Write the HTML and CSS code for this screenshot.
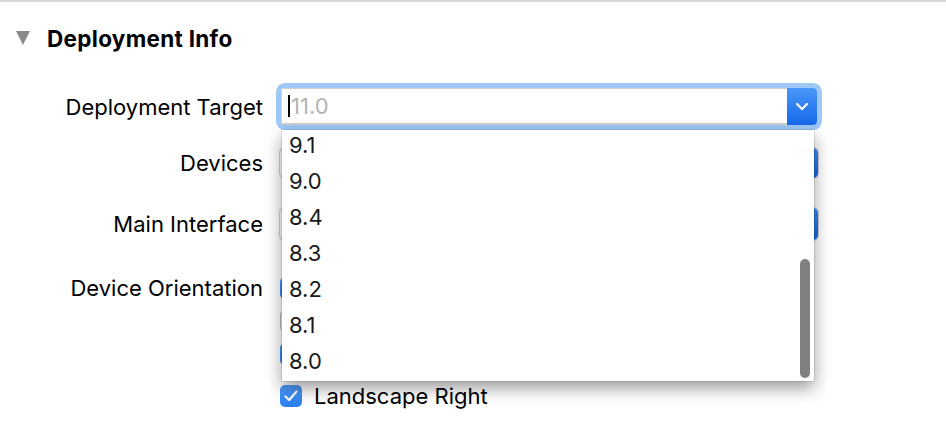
FILE: index.html
```html
<!DOCTYPE html>
<html>
<head>
<meta charset="utf-8">
<link rel="stylesheet" href="styles.css">
</head>
<body>
<div class="rule"></div>
<div class="section">
  <div class="heading">
    <span class="disclosure"></span>
    <span class="title">Deployment Info</span>
  </div>
  <div class="form">
    <div class="row row-target">
      <div class="label">Deployment Target</div>
      <div class="control">
        <div class="combo">
          <div class="combo-field"><span class="caret"></span><span class="placeholder">11.0</span></div>
          <div class="combo-btn">
            <svg width="14" height="9" viewBox="0 0 14 9"><path d="M2 2 L7 7 L12 2" fill="none" stroke="#fff" stroke-width="2.2" stroke-linecap="round" stroke-linejoin="round"/></svg>
          </div>
        </div>
      </div>
    </div>
    <div class="row row-devices">
      <div class="label">Devices</div>
      <div class="control"><div class="popup popup-a"><div class="popup-btn"></div></div></div>
    </div>
    <div class="row row-main">
      <div class="label">Main Interface</div>
      <div class="control"><div class="popup popup-b"><div class="popup-btn"></div></div></div>
    </div>
    <div class="row row-orient">
      <div class="label label-top">Device Orientation</div>
      <div class="control checks">
        <div class="check-row"><span class="box on"></span></div>
        <div class="check-row"><span class="box"></span></div>
        <div class="check-row"><span class="box on"></span></div>
        <div class="check-row last"><span class="box on"><svg width="16" height="14" viewBox="0 0 16 14"><path d="M2.5 7.5 L6.2 11 L13.5 2.5" fill="none" stroke="#fff" stroke-width="2.2" stroke-linecap="round" stroke-linejoin="round"/></svg></span><span class="check-text">Landscape Right</span></div>
      </div>
    </div>
  </div>
  <div class="menu">
    <div class="menu-list">
      <div class="item">9.1</div>
      <div class="item">9.0</div>
      <div class="item">8.4</div>
      <div class="item">8.3</div>
      <div class="item">8.2</div>
      <div class="item">8.1</div>
      <div class="item">8.0</div>
    </div>
    <div class="scroll-thumb"></div>
  </div>
</div>
</body>
</html>
```
FILE: styles.css
```css
html, body {
  margin: 0;
  padding: 0;
  background: #ffffff;
}
body {
  width: 946px;
  height: 428px;
  overflow: hidden;
  font-family: Inter, "Liberation Sans", sans-serif;
  color: #1a1a1a;
}
.rule {
  height: 2px;
  background: #d9d9d9;
}
.section {
  position: relative;
  padding-top: 24px;
}
.heading {
  display: flex;
  align-items: center;
  height: 24px;
  padding-left: 16px;
}
.disclosure {
  width: 0;
  height: 0;
  border-left: 7.5px solid transparent;
  border-right: 7.5px solid transparent;
  border-top: 14px solid #8a8a8a;
  margin-right: 17px;
}
.title {
  font-weight: 700;
  font-size: 22.5px;
  color: #000;
  letter-spacing: 0.3px;
}
.form {
  display: flex;
  flex-direction: column;
  width: 822px;
}
.row {
  display: grid;
  grid-template-columns: 263px 1fr;
  column-gap: 17px;
  align-items: center;
}
.label {
  text-align: right;
  font-size: 22px;
  color: #000;
  white-space: nowrap;
}
.row-target { margin-top: 33px; height: 47px; }
.row-devices { margin-top: 18px; height: 30px; }
.row-main { margin-top: 30px; height: 32px; }
.row-orient { margin-top: 37px; align-items: start; }
.label-top { line-height: 22px; }

.combo {
  display: flex;
  height: 37px;
  margin-left: 1px;
  width: 536px;
  border-radius: 4px;
  box-shadow: 0 0 0 5px #9ec8f6;
  background: #fff;
}
.combo-field {
  flex: 1;
  display: flex;
  align-items: center;
  padding-left: 6px;
  border-bottom: 2px solid #cfcfcf;
  border-top: 1px solid #d0d0d0;
  border-left: 1px solid #d0d0d0;
  box-sizing: border-box;
}
.caret {
  width: 2px;
  height: 22px;
  background: #000;
  margin-right: 1px;
}
.placeholder {
  font-size: 22px;
  color: #b3b3b3;
}
.combo-btn {
  width: 30px;
  display: flex;
  align-items: center;
  justify-content: center;
  background: linear-gradient(#4a97f8, #1768ec);
  border-radius: 0 4px 4px 0;
}
.popup {
  width: 538px;
  border-radius: 5px;
  background: #fff;
  box-shadow: 0 0 0 1px #d0d0d0;
  display: flex;
  justify-content: flex-end;
}
.popup-a { height: 30px; }
.popup-b { height: 32px; }
.popup-btn {
  width: 22px;
  background: linear-gradient(#3d8ff7, #1565e6);
  border-radius: 0 5px 5px 0;
}
.checks {
  display: flex;
  flex-direction: column;
  gap: 11px;
}
.check-row {
  display: flex;
  align-items: center;
  height: 22px;
}
.check-row.last {
  margin-top: 8px;
  height: 23px;
}
.box {
  width: 22px;
  height: 22px;
  border-radius: 5px;
  box-sizing: border-box;
  border: 1px solid #b8b8b8;
  background: #fff;
  display: flex;
  align-items: center;
  justify-content: center;
  flex: none;
}
.box.on {
  border: none;
  background: linear-gradient(#4f9cf9, #2a7ff2);
}
.check-text {
  margin-left: 12px;
  font-size: 22px;
  color: #000;
  white-space: nowrap;
}

.menu {
  position: absolute;
  left: 282px;
  top: 128px;
  width: 532px;
  height: 251px;
  background: #fff;
  overflow: hidden;
  box-shadow: 0 7px 16px rgba(0, 0, 0, 0.4), 0 0 0 0.5px rgba(0, 0, 0, 0.15);
}
.menu-list {
  margin-top: -3px;
}
.item {
  height: 36px;
  line-height: 36px;
  padding-left: 7px;
  font-size: 22px;
  color: #1a1a1a;
}
.scroll-thumb {
  position: absolute;
  right: 4px;
  top: 129px;
  width: 10px;
  height: 119px;
  border-radius: 5px;
  background: #808080;
}
```
